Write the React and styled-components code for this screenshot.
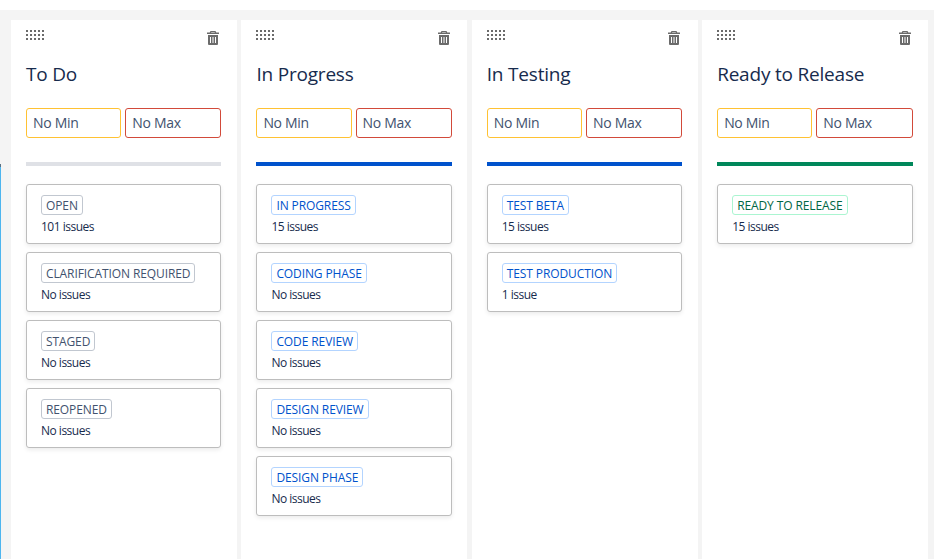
import React from "react";
import styled, { createGlobalStyle } from "styled-components";

const GlobalStyle = createGlobalStyle`
  html, body {
    margin: 0;
    height: 100%;
    background: #fff;
    overflow: hidden;
    font-family: "Open Sans", "Noto Sans", "Liberation Sans", sans-serif;
  }
  * { box-sizing: border-box; }
`;

const Board = styled.div`
  position: relative;
  height: 549px;
  margin-top: 10px;
  padding: 10px 6px 0 11px;
  background: #f4f4f4;
  display: grid;
  grid-template-columns: repeat(4, 1fr);
  gap: 4.5px;
`;

const EdgeLine = styled.div`
  position: absolute;
  left: 0;
  top: 154px;
  bottom: 0;
  width: 1px;
  background: #4db5ef;
  border-top: 3px solid #5a7184;
`;

const Column = styled.section`
  background: #fff;
  padding: 0 15.5px 0 15px;
  display: flex;
  flex-direction: column;
`;

const ColumnTop = styled.div`
  height: 28px;
  display: flex;
  justify-content: space-between;
  padding-top: 10px;
`;

const Handle = styled.svg`
  width: 19px;
  height: 10px;
  fill: #6b6b6b;
`;

const Trash = styled.svg`
  width: 12px;
  height: 14px;
  margin: 1px 2px 0 0;
  fill: #6b6b6b;
`;

const ColumnTitle = styled.h2`
  margin: 10px 0 0;
  height: 37px;
  font-size: 19px;
  line-height: 32px;
  font-weight: 400;
  letter-spacing: -0.2px;
  color: #172b4d;
`;

const Limits = styled.div`
  margin-top: 13px;
  display: grid;
  grid-template-columns: calc(50% - 2.5px) 1fr;
  gap: 4px;
`;

const LimitBox = styled.div`
  height: 30px;
  padding: 0 6px;
  border: 1px solid ${(p) => p.$color};
  border-radius: 3px;
  font-size: 14px;
  line-height: 28px;
  letter-spacing: -0.3px;
  color: #42526e;
`;

const Bar = styled.div`
  height: 4px;
  margin-top: 24px;
  background: ${(p) => p.$color};
`;

const Cards = styled.div`
  margin-top: 18px;
  display: flex;
  flex-direction: column;
  gap: 8px;
`;

const Card = styled.div`
  height: 60px;
  padding: 10px 14px 0;
  border: 1px solid #bdbdbd;
  border-radius: 3px;
  box-shadow: 0 2px 4px rgba(0, 0, 0, 0.08);
  background: #fff;
  display: flex;
  flex-direction: column;
  align-items: flex-start;
`;

const tones = {
  grey: { color: "#42526e", border: "#c1c7d0" },
  blue: { color: "#0052cc", border: "#b3d4ff" },
  green: { color: "#006644", border: "#abf5d1" },
};

const Tag = styled.span`
  height: 20px;
  padding: 0 4px;
  border: 1px solid ${(p) => tones[p.$tone].border};
  border-radius: 3px;
  font-size: 12px;
  line-height: 20px;
  letter-spacing: -0.1px;
  white-space: nowrap;
  color: ${(p) => tones[p.$tone].color};
`;

const IssueCount = styled.div`
  margin-top: 3px;
  font-size: 12px;
  line-height: 17px;
  letter-spacing: -0.5px;
  color: #172b4d;
`;

const columns = [
  {
    title: "To Do",
    bar: "#dfe1e6",
    tone: "grey",
    cards: [
      ["OPEN", "101 issues"],
      ["CLARIFICATION REQUIRED", "No issues"],
      ["STAGED", "No issues"],
      ["REOPENED", "No issues"],
    ],
  },
  {
    title: "In Progress",
    bar: "#0052cc",
    tone: "blue",
    cards: [
      ["IN PROGRESS", "15 issues"],
      ["CODING PHASE", "No issues"],
      ["CODE REVIEW", "No issues"],
      ["DESIGN REVIEW", "No issues"],
      ["DESIGN PHASE", "No issues"],
    ],
  },
  {
    title: "In Testing",
    bar: "#0052cc",
    tone: "blue",
    cards: [
      ["TEST BETA", "15 issues"],
      ["TEST PRODUCTION", "1 issue"],
    ],
  },
  {
    title: "Ready to Release",
    bar: "#00875a",
    tone: "green",
    cards: [["READY TO RELEASE", "15 issues"]],
  },
];

const dots = [];
for (let r = 0; r < 3; r++) {
  for (let c = 0; c < 5; c++) dots.push([c * 4, r * 4]);
}

const App = () => (
  <>
    <GlobalStyle />
    <Board>
      <EdgeLine />
      {columns.map((col) => (
        <Column key={col.title}>
          <ColumnTop>
            <Handle viewBox="0 0 19 10">
              {dots.map(([x, y]) => (
                <rect key={`${x}-${y}`} x={x} y={y} width="2" height="2" />
              ))}
            </Handle>
            <Trash viewBox="0 0 12 14">
              <path d="M3.500 0h5l.8 1.600H12V3H0V1.600h2.700zM4.400 1 4 1.600h4L7.600 1z" fillRule="evenodd" />
              <path d="M1 4h10v9a1 1 0 0 1-1 1H2a1 1 0 0 1-1-1zM3 6v6h1V6zm2.500 0v6h1V6zM8 6v6h1V6z" fillRule="evenodd" />
            </Trash>
          </ColumnTop>
          <ColumnTitle>{col.title}</ColumnTitle>
          <Limits>
            <LimitBox $color="#ffc233">No Min</LimitBox>
            <LimitBox $color="#d24a3a">No Max</LimitBox>
          </Limits>
          <Bar $color={col.bar} />
          <Cards>
            {col.cards.map(([name, count]) => (
              <Card key={name}>
                <Tag $tone={col.tone}>{name}</Tag>
                <IssueCount>{count}</IssueCount>
              </Card>
            ))}
          </Cards>
        </Column>
      ))}
    </Board>
  </>
);

export default App;
